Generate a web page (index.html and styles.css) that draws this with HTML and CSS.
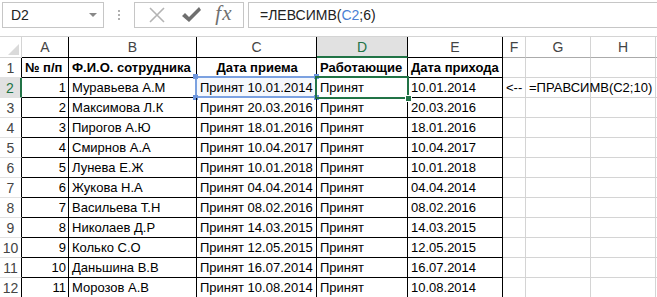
FILE: index.html
```html
<!DOCTYPE html>
<html lang="ru">
<head>
    <meta charset="UTF-8" />
    <meta name="viewport" content="width=device-width, initial-scale=1.0" />
    <title>ЛЕВСИМВ</title>
    <link rel="stylesheet" href="styles.css">
</head>
<body>
    <div class="formula-bar">
        <div class="name-box">
            <span>D2</span>
            <span class="drop"></span>
        </div>
        <div class="grip"><i></i><i></i><i></i></div>
        <div class="fx-buttons">
            <svg class="ico" width="20" height="20" viewBox="0 0 20 20">
                <path d="M3 3 L17 17 M17 3 L3 17" stroke="#b4b4b4" stroke-width="1.6" fill="none" />
            </svg>
            <svg class="ico" width="22" height="20" viewBox="0 0 22 20">
                <path d="M2 11 L5 8 L9 12 L19 2 L21 5 L9 17 Z" fill="#6f6f6f" />
            </svg>
            <span class="fx">fx</span>
        </div>
        <div class="formula-input">=ЛЕВСИМВ(<span class="ref">C2</span>;6)</div>
    </div>

    <div class="sheet">
        <!-- column headers -->
        <div class="corner"><span class="tri"></span></div>
        <div class="ch tb">A</div>
        <div class="ch tb">B</div>
        <div class="ch tb">C</div>
        <div class="ch tb active">D</div>
        <div class="ch tb">E</div>
        <div class="ch">F</div>
        <div class="ch">G</div>
        <div class="ch">H</div>
        <div class="ch last"></div>

        <!-- row 1 -->
        <div class="rh">1</div>
        <div class="c tb b">№ п/п</div>
        <div class="c tb b">Ф.И.О. сотрудника</div>
        <div class="c tb b mid">Дата приема</div>
        <div class="c tb b">Работающие</div>
        <div class="c tb b">Дата прихода</div>
        <div class="c"></div>
        <div class="c"></div>
        <div class="c"></div>
        <div class="c last"></div>

        <!-- row 2 -->
        <div class="rh active">2</div>
        <div class="c tb num">1</div>
        <div class="c tb">Муравьева А.М</div>
        <div class="c tb ref-cell">Принят 10.01.2014<span class="ref-box"><i class="h tl"></i><i class="h tr"></i><i class="h bl"></i><i class="h br"></i></span></div>
        <div class="c tb sel-cell">Принят<span class="sel-box"><i class="fill"></i></span></div>
        <div class="c tb">10.01.2014</div>
        <div class="c">&lt;--</div>
        <div class="c over">=ПРАВСИМВ(C2;10)</div>
        <div class="c"></div>
        <div class="c last"></div>

        <div class="rh">3</div>
        <div class="c tb num">2</div>
        <div class="c tb">Максимова Л.К</div>
        <div class="c tb">Принят 20.03.2016</div>
        <div class="c tb">Принят</div>
        <div class="c tb">20.03.2016</div>
        <div class="c"></div><div class="c"></div><div class="c"></div><div class="c last"></div>

        <div class="rh">4</div>
        <div class="c tb num">3</div>
        <div class="c tb">Пирогов А.Ю</div>
        <div class="c tb">Принят 18.01.2016</div>
        <div class="c tb">Принят</div>
        <div class="c tb">18.01.2016</div>
        <div class="c"></div><div class="c"></div><div class="c"></div><div class="c last"></div>

        <div class="rh">5</div>
        <div class="c tb num">4</div>
        <div class="c tb">Смирнов А.А</div>
        <div class="c tb">Принят 10.04.2017</div>
        <div class="c tb">Принят</div>
        <div class="c tb">10.04.2017</div>
        <div class="c"></div><div class="c"></div><div class="c"></div><div class="c last"></div>

        <div class="rh">6</div>
        <div class="c tb num">5</div>
        <div class="c tb">Лунева Е.Ж</div>
        <div class="c tb">Принят 10.01.2018</div>
        <div class="c tb">Принят</div>
        <div class="c tb">10.01.2018</div>
        <div class="c"></div><div class="c"></div><div class="c"></div><div class="c last"></div>

        <div class="rh">7</div>
        <div class="c tb num">6</div>
        <div class="c tb">Жукова Н.А</div>
        <div class="c tb">Принят 04.04.2014</div>
        <div class="c tb">Принят</div>
        <div class="c tb">04.04.2014</div>
        <div class="c"></div><div class="c"></div><div class="c"></div><div class="c last"></div>

        <div class="rh">8</div>
        <div class="c tb num">7</div>
        <div class="c tb">Васильева Т.Н</div>
        <div class="c tb">Принят 08.02.2016</div>
        <div class="c tb">Принят</div>
        <div class="c tb">08.02.2016</div>
        <div class="c"></div><div class="c"></div><div class="c"></div><div class="c last"></div>

        <div class="rh">9</div>
        <div class="c tb num">8</div>
        <div class="c tb">Николаев Д.Р</div>
        <div class="c tb">Принят 14.03.2015</div>
        <div class="c tb">Принят</div>
        <div class="c tb">14.03.2015</div>
        <div class="c"></div><div class="c"></div><div class="c"></div><div class="c last"></div>

        <div class="rh">10</div>
        <div class="c tb num">9</div>
        <div class="c tb">Колько С.О</div>
        <div class="c tb">Принят 12.05.2015</div>
        <div class="c tb">Принят</div>
        <div class="c tb">12.05.2015</div>
        <div class="c"></div><div class="c"></div><div class="c"></div><div class="c last"></div>

        <div class="rh">11</div>
        <div class="c tb num">10</div>
        <div class="c tb">Даньшина В.В</div>
        <div class="c tb">Принят 16.07.2014</div>
        <div class="c tb">Принят</div>
        <div class="c tb">16.07.2014</div>
        <div class="c"></div><div class="c"></div><div class="c"></div><div class="c last"></div>

        <div class="rh">12</div>
        <div class="c tb num">11</div>
        <div class="c tb">Морозов А.В</div>
        <div class="c tb">Принят 10.08.2014</div>
        <div class="c tb">Принят</div>
        <div class="c tb">10.08.2014</div>
        <div class="c"></div><div class="c"></div><div class="c"></div><div class="c last"></div>
    </div>
</body>
</html>
```

FILE: styles.css
```css
body {
    margin: 0;
    background: #fff;
    font-family: "Liberation Sans", Arial, sans-serif;
    overflow: hidden;
}

/* formula bar */

.formula-bar {
    display: flex;
    align-items: center;
    height: 29px;
    margin-bottom: 7px;
}

.name-box {
    box-sizing: border-box;
    flex-shrink: 0;
    width: 102px;
    height: 26px;
    margin-left: 2px;
    border: 1px solid #c6c6c6;
    display: flex;
    align-items: center;
    justify-content: space-between;
    padding: 0 6px 0 8px;
    font-size: 14px;
    color: #222;
}

.drop {
    width: 0;
    height: 0;
    border-left: 4px solid transparent;
    border-right: 4px solid transparent;
    border-top: 4px solid #888;
}

.grip {
    flex-shrink: 0;
    width: 30px;
    display: flex;
    flex-direction: column;
    align-items: center;
    gap: 2px;
}

.grip i {
    width: 2px;
    height: 2px;
    background: #b0b0b0;
}

.fx-buttons {
    box-sizing: border-box;
    flex-shrink: 0;
    width: 110px;
    height: 26px;
    border: 1px solid #c6c6c6;
    display: flex;
    align-items: center;
    justify-content: space-around;
    padding: 0 4px 0 6px;
}

.fx {
    font-family: "Liberation Serif", serif;
    font-style: italic;
    font-size: 21px;
    color: #707070;
    letter-spacing: 1px;
    margin-top: -2px;
}

.formula-input {
    box-sizing: border-box;
    flex: 1;
    height: 26px;
    margin-left: 4px;
    border: 1px solid #c6c6c6;
    border-right: none;
    padding: 0 10px 0 11px;
    display: flex;
    align-items: center;
    font-size: 14px;
    color: #222;
}

.ref {
    color: #4a7fd4;
}

/* sheet grid */

.sheet {
    display: grid;
    grid-template-columns: 22px 47px 128px 120px 91px 95px 23px 65px 65px 1fr;
    grid-template-rows: 21px repeat(12, 20px);
    font-size: 13px;
    color: #000;
    border-top: 1px solid #d4d4d4;
}

.sheet > div {
    box-sizing: border-box;
    border-right: 1px solid #d4d4d4;
    border-bottom: 1px solid #d4d4d4;
    white-space: nowrap;
    overflow: visible;
    position: relative;
}

.corner {
    background: #fff;
}

.tri {
    position: absolute;
    right: 2px;
    bottom: 2px;
    width: 0;
    height: 0;
    border-left: 11px solid transparent;
    border-bottom: 11px solid #dadada;
}

.ch {
    text-align: center;
    line-height: 21px;
    font-size: 14px;
    color: #444;
    border-bottom-color: #ababab !important;
}

.ch.active {
    background: #e1e1e1;
    color: #217346;
    border-bottom: 2px solid #217346 !important;
}

.rh {
    text-align: center;
    line-height: 20px;
    font-size: 14px;
    color: #444;
    border-right-color: #000 !important;
    border-bottom-color: #e1e1e1 !important;
}

.rh.active {
    background: #e1e1e1;
    color: #217346;
    border-right: 2px solid #217346 !important;
}

.c {
    line-height: 20px;
    padding: 0 2px 0 3px;
}

.sheet > .tb {
    border-right-color: #000;
    border-bottom-color: #000;
}

.ch.tb {
    border-bottom-color: #000 !important;
}

.ch.tb.active {
    border-bottom-color: #217346 !important;
}

.last {
    border-right: none !important;
}

.b {
    font-weight: bold;
}

.mid {
    text-align: center;
}

.num {
    text-align: right;
}

.over {
    z-index: 1;
}

/* reference highlight around C2 */

.ref-cell {
    background: #f5f8fd;
}

.ref-box {
    position: absolute;
    left: -2px;
    top: -2px;
    right: -1px;
    bottom: -1px;
    border: 2px solid #7ba1e0;
}

.h {
    position: absolute;
    width: 5px;
    height: 5px;
    background: #6d95dc;
}

.tl { left: -4px; top: -4px; }
.tr { right: -4px; top: -4px; }
.bl { left: -4px; bottom: -4px; }
.br { right: -4px; bottom: -4px; }

/* active cell D2 */

.sel-box {
    position: absolute;
    left: -2px;
    top: -2px;
    right: -2px;
    bottom: -2px;
    border: 2px solid #217346;
    z-index: 2;
}

.fill {
    position: absolute;
    right: -5px;
    bottom: -5px;
    width: 5px;
    height: 5px;
    background: #217346;
    border: 1px solid #fff;
}
```
